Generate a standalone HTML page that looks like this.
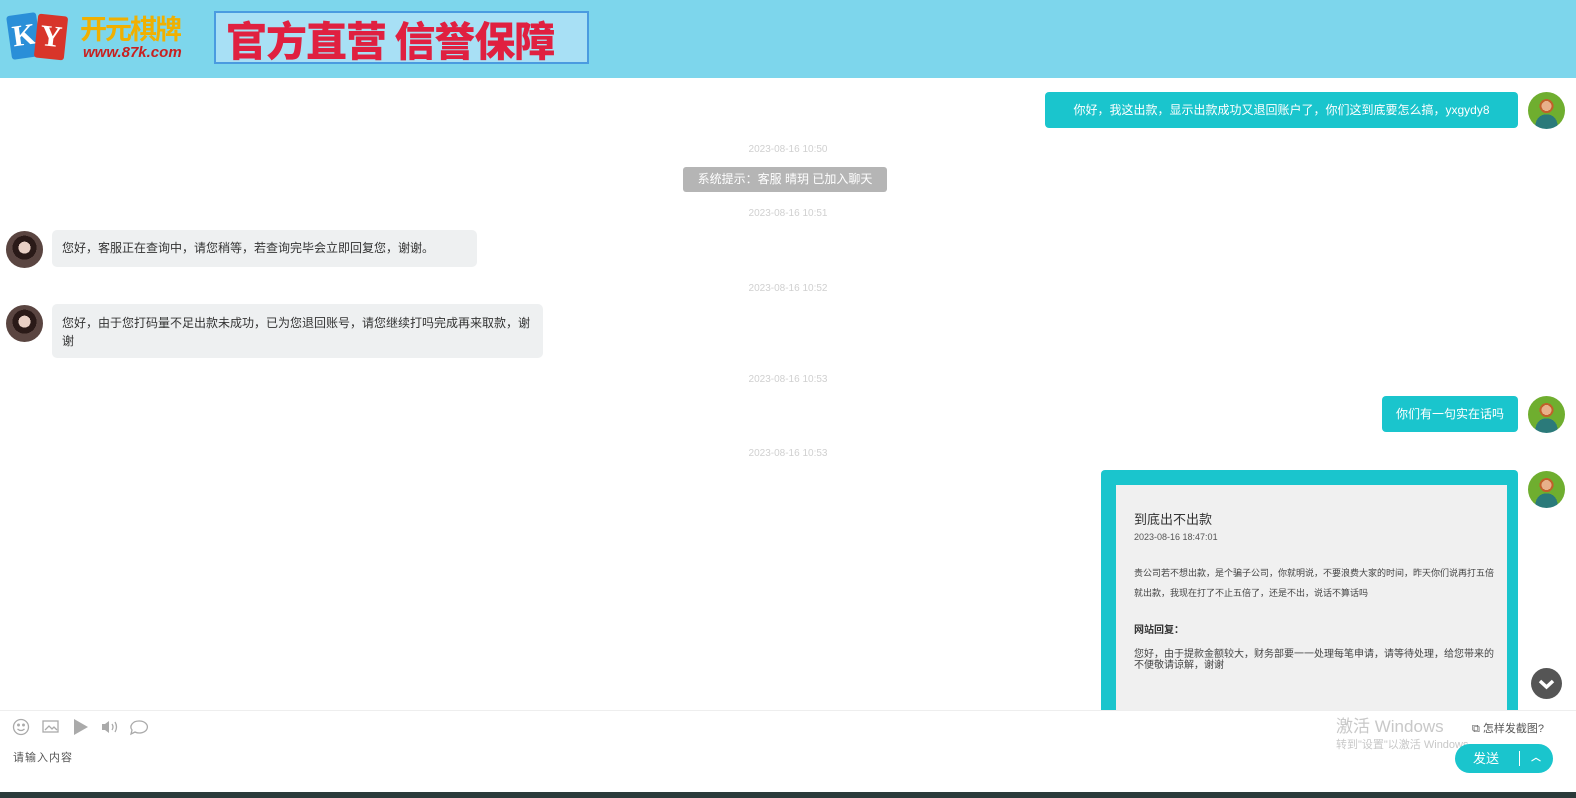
<!DOCTYPE html>
<html><head><meta charset="utf-8"><style>
*{margin:0;padding:0;box-sizing:border-box}
body{width:1576px;height:798px;position:relative;overflow:hidden;background:#fff;font-family:"Liberation Sans","Noto Sans CJK SC",sans-serif;}
.a{position:absolute}
.ts{position:absolute;left:0;width:1576px;text-align:center;font-size:10px;color:#d0d0d0}
.tb{position:absolute;background:#1ac5cd;color:#fff;font-size:12px;border-radius:4px;line-height:36px;padding:0;white-space:nowrap}
.lb{position:absolute;background:#eef0f1;color:#333;font-size:12px;border-radius:5px;padding:10px}
.av{position:absolute;width:37px;height:37px;border-radius:50%;background:radial-gradient(circle at 50% 38%,#e8b08a 0 5px,#c0602a 5px 7px,transparent 7px),radial-gradient(circle at 50% 90%,#2b7a7a 0 11px,transparent 11px),#6fae2f}
.fv{position:absolute;width:37px;height:37px;border-radius:50%;background:radial-gradient(circle at 50% 45%,#e9d0c5 0 6px,#2a1a18 6px 12px,transparent 12px),#5a4541}
</style></head><body>
<div class="a" style="left:0;top:0;width:1576px;height:78px;background:#7dd6ec"></div>
<div class="a" style="left:9px;top:14px;width:30px;height:44px;background:#2a8fd8;transform:rotate(-8deg);border-radius:3px;color:#fff;font:bold 30px 'Liberation Serif',serif;text-align:center;line-height:44px">K</div>
<div class="a" style="left:36px;top:15px;width:30px;height:44px;background:#d8352a;transform:rotate(6deg);border-radius:3px;color:#fff;font:bold 30px 'Liberation Serif',serif;text-align:center;line-height:44px">Y</div>
<div class="a" style="left:80px;top:12px;font:bold 27px 'Noto Sans CJK SC',sans-serif;color:#f0b000;letter-spacing:-2px;line-height:32px">开元棋牌</div>
<div class="a" style="left:83px;top:44px;font:bold italic 15px 'Liberation Sans',sans-serif;color:#c82020">www.87k.com</div>
<div class="a" style="left:214px;top:11px;width:375px;height:53px;background:#a8e0f5;border:2px solid #4a9be0"></div>
<div class="a" style="left:226px;top:12px;font:900 41px 'Noto Sans CJK SC',sans-serif;color:#e02040;line-height:52px;letter-spacing:-1px;white-space:nowrap">官方直营 信誉保障</div>

<div class="tb" style="left:1045px;top:92px;width:473px;text-align:center">你好，我这出款，显示出款成功又退回账户了，你们这到底要怎么搞，yxgydy8</div>
<div class="av" style="left:1528px;top:92px"></div>
<div class="ts" style="top:144px">2023-08-16 10:50</div>
<div class="a" style="left:683px;top:167px;width:204px;height:25px;background:#b5b5b5;border-radius:3px;color:#fff;font-size:12px;line-height:25px;text-align:center">系统提示：客服 晴玥 已加入聊天</div>
<div class="ts" style="top:208px">2023-08-16 10:51</div>
<div class="fv" style="left:6px;top:231px"></div>
<div class="lb" style="left:52px;top:230px;width:425px;height:37px;line-height:17px">您好，客服正在查询中，请您稍等，若查询完毕会立即回复您，谢谢。</div>
<div class="ts" style="top:283px">2023-08-16 10:52</div>
<div class="fv" style="left:6px;top:305px"></div>
<div class="lb" style="left:52px;top:304px;width:491px;height:54px;line-height:18px;padding-top:10px">您好，由于您打码量不足出款未成功，已为您退回账号，请您继续打吗完成再来取款，谢谢</div>
<div class="ts" style="top:374px">2023-08-16 10:53</div>
<div class="tb" style="left:1382px;top:396px;width:136px;text-align:center">你们有一句实在话吗</div>
<div class="av" style="left:1528px;top:396px"></div>
<div class="ts" style="top:448px">2023-08-16 10:53</div>
<div class="a" style="left:1101px;top:470px;width:417px;height:250px;background:#1ac5cd;border-radius:4px"></div>
<div class="a" style="left:1116px;top:485px;width:391px;height:235px;background:#f0f0f0;color:#333">
<div class="a" style="left:18px;top:24px;font-size:13px">到底出不出款</div>
<div class="a" style="left:18px;top:47px;font-size:9px;color:#555">2023-08-16 18:47:01</div>
<div class="a" style="left:18px;top:78px;width:362px;font-size:9px;line-height:20px;color:#444">贵公司若不想出款，是个骗子公司，你就明说，不要浪费大家的时间，昨天你们说再打五倍就出款，我现在打了不止五倍了，还是不出，说话不算话吗</div>
<div class="a" style="left:18px;top:136px;font-size:10px;font-weight:bold">网站回复：</div>
<div class="a" style="left:18px;top:164px;width:362px;font-size:10px;line-height:11px;color:#444">您好，由于提款金额较大，财务部要一一处理每笔申请，请等待处理，给您带来的不便敬请谅解，谢谢</div>
</div>
<div class="av" style="left:1528px;top:471px"></div>
<div class="a" style="left:1531px;top:668px;width:31px;height:31px;border-radius:50%;background:#555"><svg width="31" height="31"><path d="M9 13l6.5 6 6.5-6" stroke="#fff" stroke-width="3.5" fill="none"/></svg></div>

<div class="a" style="left:0;top:710px;width:1576px;height:82px;background:#fff;border-top:1px solid #eee"></div>
<svg class="a" style="left:12px;top:718px" width="140" height="20" fill="none" stroke="#aaa" stroke-width="1.3">
<circle cx="9" cy="9" r="7.5"/><circle cx="6.5" cy="7" r=".8" fill="#aaa"/><circle cx="11.5" cy="7" r=".8" fill="#aaa"/><path d="M5.5 11q3.5 3 7 0"/>
<rect x="31" y="3" width="15" height="11"/><path d="M33 12l4-4 3 3 2-2 3 3"/>
<path d="M62 1l14 8-14 8z" fill="#aaa" stroke="none"/>
<path d="M90 6h3l4-3v12l-4-3h-3z" fill="#aaa" stroke="none"/><path d="M100 6q2 3 0 6M103 4q3 5 0 10"/>
<path d="M127 3a8 6 0 1 1-4 11l-4 2 1-4a8 6 0 0 1 7-9z"/>
</svg>
<div class="a" style="left:13px;top:749px;font-size:11px;color:#555;letter-spacing:1px">请输入内容</div>
<div class="a" style="left:1336px;top:712px;font-size:17px;color:#c8c8c8">激活 Windows</div>
<div class="a" style="left:1336px;top:736px;font-size:11px;color:#c8c8c8">转到"设置"以激活 Windows。</div>
<div class="a" style="left:1472px;top:720px;font-size:11px;color:#555">⧉ 怎样发截图?</div>
<div class="a" style="left:1455px;top:744px;width:98px;height:29px;border-radius:15px;background:#1ac5cd;color:#fff;font-size:13px;line-height:29px">
<span class="a" style="left:18px">发送</span><span class="a" style="left:64px;top:7px;height:15px;border-left:1px solid #fff"></span><span class="a" style="left:76px;font-size:10px;font-weight:bold">︿</span></div>
<div class="a" style="left:0;top:792px;width:1576px;height:6px;background:#2a3a3a"></div>
</body></html>
